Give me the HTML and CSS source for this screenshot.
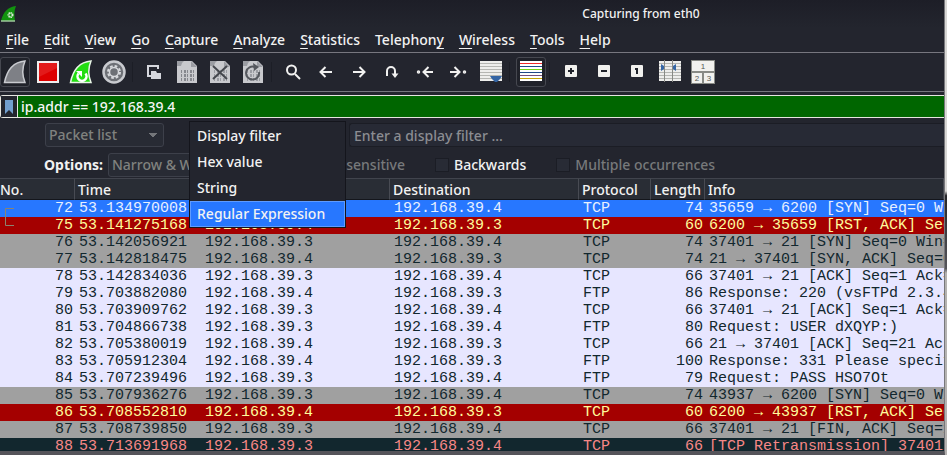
FILE: index.html
```
<!DOCTYPE html>
<html lang="en">
<head>
<meta charset="utf-8">
<title>Capturing from eth0</title>
<link rel="stylesheet" href="styles.css">
</head>
<body>
<div class="window">
  <header class="titlebar">
    <svg class="app-icon" width="18" height="18" viewBox="0 0 18 18"><path d="M1 16C3 7 8 2 16 1c-2 5-2 9-1 15z" fill="#12930f"/><path d="M1 16h14" stroke="#9fc79c" stroke-width="1.5"/><circle cx="10.500" cy="10" r="2" fill="none" stroke="#d8ecd6" stroke-width="2" stroke-dasharray="1.2 .5"/></svg>
    <h1 class="title">Capturing from eth0</h1>
  </header>
  <nav class="menubar">
    <a href="#"><u>F</u>ile</a><a href="#"><u>E</u>dit</a><a href="#"><u>V</u>iew</a><a href="#"><u>G</u>o</a><a href="#"><u>C</u>apture</a><a href="#"><u>A</u>nalyze</a><a href="#"><u>S</u>tatistics</a><a href="#">Telephon<u>y</u></a><a href="#"><u>W</u>ireless</a><a href="#"><u>T</u>ools</a><a href="#"><u>H</u>elp</a>
  </nav>
  <div class="toolbar" role="toolbar">
    <button class="tool active" aria-label="Start capture"><svg width="24" height="24" viewBox="0 0 24 24"><path d="M1.500 22.500C4 10 11 2 22 1c-3 7-3 14 0 21.500z" fill="#7e8086" stroke="#c9cbd0" stroke-width="1.500"/></svg></button>
    <button class="tool" aria-label="Stop capture"><svg width="24" height="24" viewBox="0 0 24 24"><rect x="2" y="2" width="20" height="20" fill="#dd0000" stroke="#f0eeee" stroke-width="2"/><path d="M3 3h18v5L3 17z" fill="#e93434" opacity=".5"/></svg></button>
    <button class="tool" aria-label="Restart capture"><svg width="24" height="24" viewBox="0 0 24 24"><path d="M1.500 22.500C4 10 11 2 22 1c-3 7-3 14 0 21.500z" fill="#22dd11" stroke="#e8f6e6" stroke-width="1.500"/><path d="M16.500 13.500a4.500 4.500 0 1 1-7 0" fill="none" stroke="#fff" stroke-width="2.500"/><path d="M7 11h6v6z" fill="#fff"/></svg></button>
    <button class="tool" aria-label="Capture options"><svg width="24" height="24" viewBox="0 0 24 24"><circle cx="12" cy="12" r="10.500" fill="#6d7076" stroke="#c9cbd0" stroke-width="2.500"/><circle cx="12" cy="12" r="6" fill="none" stroke="#d8dade" stroke-width="2" stroke-dasharray="2.700 2"/><circle cx="12" cy="12" r="4.500" fill="none" stroke="#d8dade" stroke-width="1.500"/></svg></button>
    <span class="sep"></span>
    <button class="tool" aria-label="Open file"><svg width="24" height="24" viewBox="0 0 24 24"><path d="M9 16H6V6h10v3" fill="none" stroke="#d5d7dd" stroke-width="2"/><path d="M9 11h5l1 2h4v6H9z" fill="#d5d7dd"/></svg></button>
    <button class="tool" aria-label="Save file"><svg width="24" height="24" viewBox="0 0 24 24"><path d="M2 1h15l5 5v17H2z" fill="#c8c9cd"/><path d="M2 1h7q-3 2-3 5H2zM16 1v6h6z" fill="#9b9da3"/><g stroke="#85878d" stroke-width="3" stroke-dasharray="1 2 2 1"><path d="M6 11.500h13M6 15.500h13M6 19.500h13"/></g></svg></button>
    <button class="tool" aria-label="Close file"><svg width="24" height="24" viewBox="0 0 24 24"><path d="M2 1h15l5 5v17H2z" fill="#c8c9cd"/><path d="M2 1h7q-3 2-3 5H2zM16 1v6h6z" fill="#9b9da3"/><g stroke="#9b9da3" stroke-width="3" stroke-dasharray="1 2 2 1"><path d="M6 11.500h13M6 15.500h13M6 19.500h13"/></g><path d="M5 6l14 13M19 6L5 19" stroke="#45484e" stroke-width="2"/></svg></button>
    <button class="tool" aria-label="Reload file"><svg width="24" height="24" viewBox="0 0 24 24"><path d="M2 1h15l5 5v17H2z" fill="#c8c9cd"/><path d="M2 1h7q-3 2-3 5H2zM16 1v6h6z" fill="#9b9da3"/><g stroke="#9b9da3" stroke-width="3" stroke-dasharray="1 2 2 1"><path d="M6 11.500h13M6 15.500h13M6 19.500h13"/></g><path d="M14 7a6.500 6.500 0 1 0 4 5" fill="none" stroke="#55585e" stroke-width="2"/><path d="M12 3l6 4-5 4z" fill="#55585e"/></svg></button>
    <span class="sep"></span>
    <button class="tool line" aria-label="Find packet"><svg width="24" height="24" viewBox="0 0 24 24"><circle cx="10.500" cy="10" r="4.500"/><path d="M14 14l5 5"/></svg></button>
    <button class="tool line" aria-label="Previous packet"><svg width="24" height="24" viewBox="0 0 24 24"><path d="M18 12H7M11.500 7L6.500 12l5 5"/></svg></button>
    <button class="tool line" aria-label="Next packet"><svg width="24" height="24" viewBox="0 0 24 24"><path d="M6 12h11M12.500 7l5 5-5 5"/></svg></button>
    <button class="tool line" aria-label="Go to packet"><svg width="24" height="24" viewBox="0 0 24 24"><path d="M7 16v-5a4 4 0 0 1 8 0v5"/><path d="M11.500 13.500h7L15 18z" fill="#f1f1f0" stroke="none"/></svg></button>
    <button class="tool line" aria-label="First packet"><svg width="24" height="24" viewBox="0 0 24 24"><path d="M20 12h-9M15.500 7l-5 5 5 5"/><circle cx="5.500" cy="12" r="1" stroke-width="1.500"/></svg></button>
    <button class="tool line" aria-label="Last packet"><svg width="24" height="24" viewBox="0 0 24 24"><path d="M4 12h9M8.500 7l5 5-5 5"/><circle cx="18.500" cy="12" r="1" stroke-width="1.500"/></svg></button>
    <button class="tool" aria-label="Auto scroll"><svg width="24" height="24" viewBox="0 0 24 24"><path d="M1 1h22v20H1z" fill="#eeeeec"/><path d="M1 3.500h22M1 6.500h22M1 9.500h22M1 12.500h22M1 15.500h22M1 18.500h22" stroke="#b5b6b2"/><path d="M11 16h12l-2 3-3 3h-2l-3-3z" fill="#3465a4"/></svg></button>
    <span class="sep"></span>
    <button class="tool active" aria-label="Colorize"><svg width="24" height="24" viewBox="0 0 24 24"><path d="M1 1h22v20H1z" fill="#fff"/><rect x="1" y="3" width="22" height="1" fill="#ef2929"/><rect x="1" y="6" width="22" height="1" fill="#204a87"/><rect x="1" y="9" width="22" height="1" fill="#73d216"/><rect x="1" y="12" width="22" height="1" fill="#204a87"/><rect x="1" y="15" width="22" height="1" fill="#75507b"/><rect x="1" y="18" width="22" height="1" fill="#c4a000"/></svg></button>
    <span class="sep"></span>
    <button class="tool" aria-label="Zoom in"><svg width="24" height="24" viewBox="0 0 24 24"><rect x="6" y="5" width="12" height="12" rx="1" fill="#f1f1ee"/><path d="M9 11h6M12 8v6" stroke="#20232b" stroke-width="2"/></svg></button>
    <button class="tool" aria-label="Zoom out"><svg width="24" height="24" viewBox="0 0 24 24"><rect x="6" y="5" width="12" height="12" rx="1" fill="#f1f1ee"/><path d="M9 11h6" stroke="#20232b" stroke-width="2"/></svg></button>
    <button class="tool" aria-label="Normal size"><svg width="24" height="24" viewBox="0 0 24 24"><rect x="6" y="5" width="12" height="12" rx="1" fill="#f1f1ee"/><path d="M10 9h2v5" fill="none" stroke="#20232b" stroke-width="2"/></svg></button>
    <button class="tool" aria-label="Resize columns"><svg width="24" height="24" viewBox="0 0 24 24"><path d="M1 1h22v20H1z" fill="#eeeeec"/><path d="M1 3.500h22M1 6.500h22M1 9.500h22M1 12.500h22M1 15.500h22M1 18.500h22" stroke="#b5b6b2"/><path d="M6.500 0v22M14.500 0v22" stroke="#888a85"/><path d="M3 4l3 2v3l-3 2zM18 4l-3 2v3l3 2z" fill="#3465a4"/></svg></button>
    <button class="tool" aria-label="Layout"><svg width="24" height="24" viewBox="0 0 24 24"><path d="M0 0h24v24H0z" fill="#888a85"/><path d="M1 1h22v10H1zM1 13h10v10H1zM13 13h10v10H13z" fill="#f1f1ee"/><g font-family="Liberation Sans" font-size="8" fill="#555753" text-anchor="middle"><text x="12" y="9">1</text><text x="6" y="21">2</text><text x="18" y="21">3</text></g></svg></button>
  </div>
  <div class="filterbar">
    <button class="bookmark" aria-label="Bookmarks"><svg width="10" height="16" viewBox="0 0 10 16"><path d="M1 1h8v14l-4-4-4 4z" fill="#729fcf"/></svg></button>
    <input class="filter" type="text" aria-label="Display filter" value="ip.addr == 192.168.39.4">
  </div>
  <form class="find">
    <div class="find-row">
      <select class="combo scope" aria-label="Search in" disabled><option>Packet list</option></select>
      <div class="kind">
        <button type="button" class="combo kind-button" aria-label="Search type"></button>
        <ul class="popup" role="listbox">
          <li role="option">Display filter</li>
          <li role="option">Hex value</li>
          <li role="option">String</li>
          <li role="option" class="selected" aria-selected="true">Regular Expression</li>
        </ul>
      </div>
      <input class="query" type="text" aria-label="Search text" placeholder="Enter a display filter …">
    </div>
    <div class="find-row options">
      <b class="caption">Options:</b>
      <select class="combo width" aria-label="Character width" disabled><option>Narrow &amp; Wide</option></select>
      <label class="check case off"><input type="checkbox" disabled>Case sensitive</label>
      <label class="check"><input type="checkbox">Backwards</label>
      <label class="check off"><input type="checkbox" disabled>Multiple occurrences</label>
    </div>
  </form>
  <main class="packets">
    <table>
      <colgroup><col class="c-no"><col class="c-time"><col class="c-src"><col class="c-dst"><col class="c-proto"><col class="c-len"><col></colgroup>
      <thead><tr><th>No.</th><th>Time</th><th>Source</th><th>Destination</th><th>Protocol</th><th>Length</th><th>Info</th></tr></thead>
      <tbody>
        <tr class="current"><td>72</td><td>53.134970008</td><td>192.168.39.3</td><td>192.168.39.4</td><td>TCP</td><td>74</td><td>35659 → 6200 [SYN] Seq=0 Win=64240</td></tr>
        <tr class="rst"><td>75</td><td>53.141275168</td><td>192.168.39.4</td><td>192.168.39.3</td><td>TCP</td><td>60</td><td>6200 → 35659 [RST, ACK] Seq=1</td></tr>
        <tr class="syn"><td>76</td><td>53.142056921</td><td>192.168.39.3</td><td>192.168.39.4</td><td>TCP</td><td>74</td><td>37401 → 21 [SYN] Seq=0 Win=64240</td></tr>
        <tr class="syn"><td>77</td><td>53.142818475</td><td>192.168.39.4</td><td>192.168.39.3</td><td>TCP</td><td>74</td><td>21 → 37401 [SYN, ACK] Seq=0</td></tr>
        <tr><td>78</td><td>53.142834036</td><td>192.168.39.3</td><td>192.168.39.4</td><td>TCP</td><td>66</td><td>37401 → 21 [ACK] Seq=1 Ack=1</td></tr>
        <tr><td>79</td><td>53.703882080</td><td>192.168.39.4</td><td>192.168.39.3</td><td>FTP</td><td>86</td><td>Response: 220 (vsFTPd 2.3.4)</td></tr>
        <tr><td>80</td><td>53.703909762</td><td>192.168.39.3</td><td>192.168.39.4</td><td>TCP</td><td>66</td><td>37401 → 21 [ACK] Seq=1 Ack=21</td></tr>
        <tr><td>81</td><td>53.704866738</td><td>192.168.39.3</td><td>192.168.39.4</td><td>FTP</td><td>80</td><td>Request: USER dXQYP:)</td></tr>
        <tr><td>82</td><td>53.705380019</td><td>192.168.39.4</td><td>192.168.39.3</td><td>TCP</td><td>66</td><td>21 → 37401 [ACK] Seq=21 Ack=15</td></tr>
        <tr><td>83</td><td>53.705912304</td><td>192.168.39.4</td><td>192.168.39.3</td><td>FTP</td><td>100</td><td>Response: 331 Please specify</td></tr>
        <tr><td>84</td><td>53.707239496</td><td>192.168.39.3</td><td>192.168.39.4</td><td>FTP</td><td>79</td><td>Request: PASS HSO7Ot</td></tr>
        <tr class="syn"><td>85</td><td>53.707936276</td><td>192.168.39.3</td><td>192.168.39.4</td><td>TCP</td><td>74</td><td>43937 → 6200 [SYN] Seq=0 Win=64240</td></tr>
        <tr class="rst"><td>86</td><td>53.708552810</td><td>192.168.39.4</td><td>192.168.39.3</td><td>TCP</td><td>60</td><td>6200 → 43937 [RST, ACK] Seq=1</td></tr>
        <tr class="syn"><td>87</td><td>53.708739850</td><td>192.168.39.3</td><td>192.168.39.4</td><td>TCP</td><td>66</td><td>37401 → 21 [FIN, ACK] Seq=15</td></tr>
        <tr class="bad"><td>88</td><td>53.713691968</td><td>192.168.39.3</td><td>192.168.39.4</td><td>TCP</td><td>66</td><td>[TCP Retransmission] 37401 → 21</td></tr>
      </tbody>
    </table>
    <svg class="flow" width="12" height="22" viewBox="0 0 12 22"><path d="M10 2.500H1.500v17H10" fill="none" stroke="#8b8370"/></svg>
  </main>
</div>
</body>
</html>
```
FILE: styles.css
```
* { box-sizing: border-box; }
body {
  margin: 0;
  height: 100vh;
  padding-right: 2px;
  overflow: hidden;
  background: linear-gradient(#d8d7d5 42%, #26262a 43%, #55555a 59%, #b5b3b1 60%);
  color: #f2f2f2;
  font: 500 14px/20px "Noto Sans", sans-serif;
}
button, input, select { font: inherit; color: inherit; margin: 0; }
.window {
  display: flex;
  flex-direction: column;
  height: 100%;
  background: #23252e;
  border-right: 1px solid #77777b;
  border-bottom: 4px solid #55545a;
}
.titlebar {
  display: flex;
  align-items: center;
  height: 28px;
  background: linear-gradient(#1d1e27, #23252e);
}
.title {
  flex: 1;
  margin: 0;
  padding-left: 320px;
  text-align: center;
  font-size: 12px;
  font-weight: 500;
  line-height: 28px;
}
.menubar {
  display: flex;
  gap: 15px;
  height: 25px;
  padding: 2px 6px;
  border-bottom: 1px solid #77777f;
}
.menubar a { color: inherit; text-decoration: none; }
.menubar u { text-underline-offset: 3px; text-decoration-thickness: 1px; }
.toolbar {
  display: flex;
  align-items: center;
  gap: 3px;
  height: 39px;
  border-bottom: 1px solid #77777f;
}
.tool {
  flex: none;
  display: grid;
  place-items: center;
  width: 30px;
  height: 30px;
  padding: 0;
  border: 1px solid transparent;
  border-radius: 3px;
  background: none;
}
.tool.active { border-color: #464850; background: #20222a; }
.tool svg { display: block; }
.line svg { fill: none; stroke: #f1f1f0; stroke-width: 2; }
.sep { width: 4px; height: 20px; border-left: 1px solid #1c1e26; }
.filterbar {
  display: flex;
  height: 23px;
  margin-top: 3px;
  border: 1px solid #e6e6e0;
  border-right: 0;
  border-radius: 3px 0 0 3px;
}
.bookmark {
  display: grid;
  place-items: center;
  width: 17px;
  padding: 0;
  border: 0;
  border-right: 1px solid #e6e6e0;
  background: #23252e;
}
.filter { flex: 1; min-width: 0; padding: 0 3px; border: 0; background: #006600; color: #f5f5f5; }
.find { padding-top: 5px; }
.find-row { display: flex; align-items: center; height: 24px; padding-left: 45px; }
.options { margin-top: 6px; padding-left: 44px; }
.combo {
  height: 24px;
  padding: 0 3px;
  border: 1px solid #3d404a;
  border-radius: 3px;
  background: #282b34;
  color: #80827f;
}
.combo:disabled { opacity: 1; }
.scope {
  width: 119px;
  appearance: none;
  background:
    linear-gradient(#74767a, #74767a) no-repeat right 6px top 9px / 8px 1px,
    linear-gradient(#74767a, #74767a) no-repeat right 7px top 10px / 6px 1px,
    linear-gradient(#74767a, #74767a) no-repeat right 8px top 11px / 4px 1px,
    linear-gradient(#74767a, #74767a) no-repeat right 9px top 12px / 2px 1px,
    #282b34;
}
.kind { position: relative; width: 157px; margin-left: 25px; }
.kind-button { display: block; width: 100%; }
.popup {
  position: absolute;
  z-index: 1;
  top: -2px;
  left: 0;
  width: 157px;
  margin: 0;
  padding: 1px 0 0;
  border: 1px solid #14151c;
  background: #23252e;
  list-style: none;
}
.popup li { padding: 3px 7px; }
.popup .selected { padding: 2px 6px; border: 1px solid #5f9bff; background: #2777ff; }
.query {
  flex: 1;
  min-width: 0;
  height: 24px;
  margin-left: 3px;
  padding: 0 4px;
  border: 1px solid #1b1d25;
  border-right: 0;
  border-radius: 3px 0 0 3px;
  background: #272a35;
}
.query::placeholder { color: #8b8d92; opacity: 1; }
.caption { width: 64px; font-weight: 700; }
.width { width: 140px; appearance: none; }
.check { display: flex; align-items: center; gap: 5px; white-space: nowrap; margin-left: 30px; }
.case { width: 117px; margin-left: 40px; justify-content: flex-end; }
.off { color: #77797b; }
.check input {
  appearance: none;
  width: 14px;
  height: 14px;
  border: 1px solid #1b1d25;
  background: #282b35;
}
.packets {
  position: relative;
  flex: 1;
  min-height: 0;
  margin-top: 1px;
  overflow: hidden;
  background: #e7e6ff;
}
table { width: 100%; table-layout: fixed; border-collapse: separate; border-spacing: 0; }
.c-no { width: 75px; }
.c-time { width: 126px; }
.c-src { width: 189px; }
.c-dst { width: 189px; }
.c-proto { width: 72px; }
.c-len { width: 54px; }
th {
  height: 22px;
  padding: 1px 3px 0;
  border-top: 1px solid #41444d;
  border-right: 1px solid #484b53;
  border-bottom: 1px solid #14161c;
  background: #292d35;
  font-weight: 500;
  line-height: 19px;
  text-align: left;
  white-space: nowrap;
}
th:first-child { padding-left: 0; }
td {
  height: 17px;
  padding: 0 2px 0 4px;
  overflow: hidden;
  color: #12272e;
  font: 15px/17px "Liberation Mono", monospace;
  white-space: nowrap;
}
td:nth-child(1), td:nth-child(6) { text-align: right; }
.current td { background: #2777ff; color: #e7f0ff; }
.rst td { background: #a40000; color: #fffc9c; }
.syn td { background: #a0a0a0; }
.bad td { background: #12272e; color: #f78787; }
.flow { position: absolute; top: 28px; left: 4px; }
```
